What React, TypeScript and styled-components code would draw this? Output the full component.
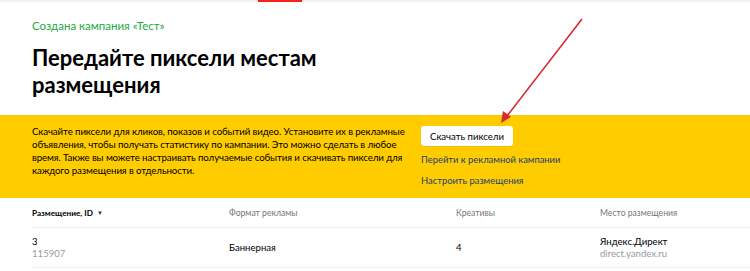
import React from "react";
import styled, { createGlobalStyle } from "styled-components";

const GlobalStyle = createGlobalStyle`
  html, body { margin: 0; padding: 0; background: #fff; }
  body { font-family: Lato, "Noto Sans", Arial, sans-serif; color: #000; }
  * { box-sizing: border-box; }
`;

const Page = styled.div`
  position: relative;
  width: 750px;
  height: 271px;
  overflow: hidden;
  background: #fff;
`;

const TopBar = styled.div`
  height: 2px;
  background: #f2f2f2;
  display: flex;
`;

const TabIndicator = styled.div`
  margin-left: 258px;
  width: 44px;
  height: 2px;
  background: #ff1e1e;
`;

const Header = styled.header`
  padding: 15px 32px 0;
`;

const Created = styled.div`
  color: #24a844;
  font-size: 11.5px;
  line-height: 18px;
`;

const Title = styled.h1`
  margin: 9px 0 0;
  font-size: 22px;
  line-height: 27px;
  font-weight: 700;
  width: 330px;
  color: #000;
`;

const Banner = styled.section`
  margin-top: 17px;
  background: #ffcc00;
  height: 83px;
  padding: 10px 32px 0;
  display: flex;
  gap: 19px;
`;

const BannerText = styled.p`
  margin: 0;
  width: 370px;
  font-size: 9.7px;
  letter-spacing: -0.1px;
  line-height: 13px;
  white-space: nowrap;
  color: #000;
`;

const Actions = styled.div`
  display: flex;
  flex-direction: column;
  align-items: flex-start;
  padding-top: 1px;
`;

const Button = styled.button`
  font-family: inherit;
  font-size: 9.6px;
  height: 20px;
  width: 92px;
  padding: 0;
  background: #fff;
  border: none;
  border-radius: 3px;
  color: #000;
  cursor: pointer;
  box-shadow: 0 1px 1px rgba(0, 0, 0, 0.08);
`;

const Link = styled.a<{ $gap: number }>`
  font-size: 9.4px;
  line-height: 14px;
  color: #223f74;
  text-decoration: none;
  margin-top: ${(p) => p.$gap}px;
`;

const Table = styled.div`
  padding-left: 32px;
`;

const Row = styled.div<{ $height: number }>`
  display: grid;
  grid-template-columns: 197px 227px 144px 1fr;
  align-items: center;
  height: ${(p) => p.$height}px;
  border-bottom: 1px solid #ededed;
`;

const HeadCell = styled.div<{ $strong?: boolean }>`
  font-size: ${(p) => (p.$strong ? 8.2 : 8.6)}px;
  font-weight: ${(p) => (p.$strong ? 700 : 400)};
  color: ${(p) => (p.$strong ? "#000" : "#777")};
  display: flex;
  align-items: center;
  gap: 4px;
`;

const Cell = styled.div`
  font-size: 9.6px;
  line-height: 12px;
  color: #000;
`;

const Sub = styled.div`
  font-size: 9.6px;
  line-height: 12px;
  color: #9a9a9a;
`;

const Caret = styled.span`
  font-size: 6px;
  color: #333;
`;

const ArrowOverlay = styled.svg`
  position: absolute;
  left: 0;
  top: 0;
  pointer-events: none;
`;

export default function App() {
  return (
    <Page>
      <GlobalStyle />
      <TopBar>
        <TabIndicator />
      </TopBar>
      <Header>
        <Created>Создана кампания «Тест»</Created>
        <Title>Передайте пиксели местам размещения</Title>
      </Header>
      <Banner>
        <BannerText>
          Скачайте пиксели для кликов, показов и событий видео. Установите их в рекламные
          <br />
          объявления, чтобы получать статистику по кампании. Это можно сделать в любое
          <br />
          время. Также вы можете настраивать получаемые события и скачивать пиксели для
          <br />
          каждого размещения в отдельности.
        </BannerText>
        <Actions>
          <Button>Скачать пиксели</Button>
          <Link href="#" $gap={7}>Перейти к рекламной кампании</Link>
          <Link href="#" $gap={7}>Настроить размещения</Link>
        </Actions>
      </Banner>
      <Table>
        <Row $height={30}>
          <HeadCell $strong>
            Размещение, ID <Caret>▼</Caret>
          </HeadCell>
          <HeadCell>Формат рекламы</HeadCell>
          <HeadCell>Креативы</HeadCell>
          <HeadCell>Место размещения</HeadCell>
        </Row>
        <Row $height={40}>
          <div>
            <Cell>3</Cell>
            <Sub>115907</Sub>
          </div>
          <Cell>Баннерная</Cell>
          <Cell>4</Cell>
          <div>
            <Cell>Яндекс.Директ</Cell>
            <Sub>direct.yandex.ru</Sub>
          </div>
        </Row>
      </Table>
      <ArrowOverlay width="750" height="271" viewBox="0 0 750 271">
        <line x1="582" y1="19" x2="507" y2="116" stroke="#d42a30" strokeWidth="1.6" />
        <polygon points="501,123 503,111 511,117" fill="#d42a30" />
      </ArrowOverlay>
    </Page>
  );
}
